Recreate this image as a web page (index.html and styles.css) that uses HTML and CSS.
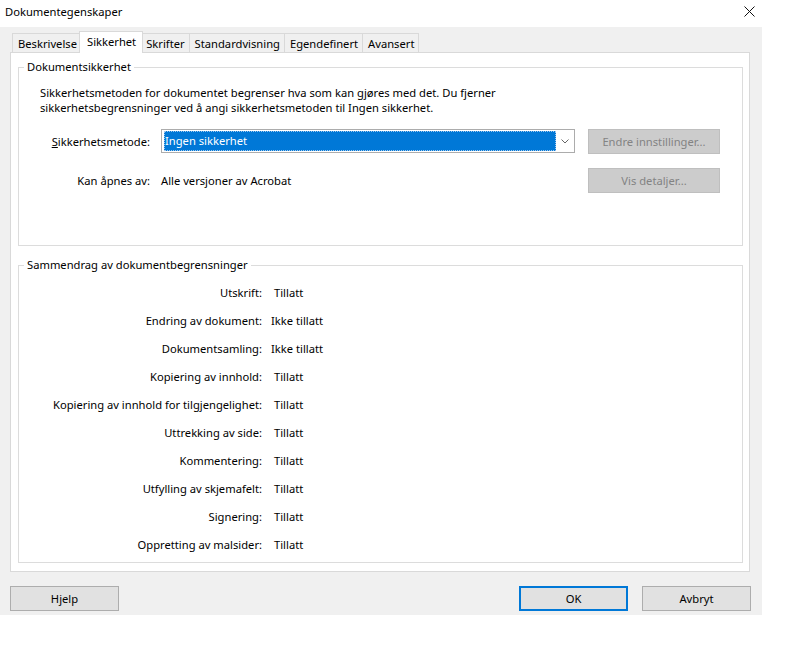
FILE: index.html
```html
<!DOCTYPE html>
<html lang="no">
<head>
<meta charset="utf-8">
<title>Dokumentegenskaper</title>
<link rel="stylesheet" href="styles.css">
</head>
<body>
<div class="titlebar">
  <span class="title">Dokumentegenskaper</span>
  <svg class="close" width="11" height="11" viewBox="0 0 11 11"><path d="M0.5 0.5L10.5 10.5M10.5 0.5L0.5 10.5" stroke="#111" stroke-width="1" fill="none"/></svg>
</div>
<div class="dialog">
  <div class="tabs">
    <div class="tab">Beskrivelse</div>
    <div class="tab active">Sikkerhet</div>
    <div class="tab">Skrifter</div>
    <div class="tab">Standardvisning</div>
    <div class="tab">Egendefinert</div>
    <div class="tab">Avansert</div>
  </div>
  <div class="panel">
    <fieldset class="group group-security">
      <legend>Dokumentsikkerhet</legend>
      <p class="intro"><span class="line">Sikkerhetsmetoden for dokumentet begrenser hva som kan gjøres med det. Du fjerner</span><span class="line">sikkerhetsbegrensninger ved å angi sikkerhetsmetoden til Ingen sikkerhet.</span></p>
      <div class="row">
        <span class="lbl"><u>S</u>ikkerhetsmetode:</span>
        <div class="field combo">
          <span class="combo-value">Ingen sikkerhet</span>
          <span class="combo-arrow"><svg width="8" height="5" viewBox="0 0 8 5"><path d="M0.5 0.5L4 4L7.5 0.5" stroke="#666" fill="none"/></svg></span>
        </div>
        <button class="btn side" disabled>Endre innstillinger...</button>
      </div>
      <div class="row">
        <span class="lbl">Kan åpnes av:</span>
        <span class="field">Alle versjoner av Acrobat</span>
        <button class="btn side" disabled>Vis detaljer...</button>
      </div>
    </fieldset>
    <fieldset class="group group-summary">
      <legend>Sammendrag av dokumentbegrensninger</legend>
      <dl class="summary">
        <dt>Utskrift:</dt><dd class="yes">Tillatt</dd>
        <dt>Endring av dokument:</dt><dd>Ikke tillatt</dd>
        <dt>Dokumentsamling:</dt><dd>Ikke tillatt</dd>
        <dt>Kopiering av innhold:</dt><dd class="yes">Tillatt</dd>
        <dt>Kopiering av innhold for tilgjengelighet:</dt><dd class="yes">Tillatt</dd>
        <dt>Uttrekking av side:</dt><dd class="yes">Tillatt</dd>
        <dt>Kommentering:</dt><dd class="yes">Tillatt</dd>
        <dt>Utfylling av skjemafelt:</dt><dd class="yes">Tillatt</dd>
        <dt>Signering:</dt><dd class="yes">Tillatt</dd>
        <dt>Oppretting av malsider:</dt><dd class="yes">Tillatt</dd>
      </dl>
    </fieldset>
  </div>
  <div class="footer">
    <button class="btn">Hjelp</button>
    <button class="btn default">OK</button>
    <button class="btn">Avbryt</button>
  </div>
</div>
</body>
</html>
```
FILE: styles.css
```css
body {
  margin: 0;
  background: #fff;
  font-family: "Noto Sans", "Open Sans", sans-serif;
  font-size: 11.2px;
  color: #000;
}

.titlebar {
  height: 27px;
  box-sizing: border-box;
  display: flex;
  justify-content: space-between;
  align-items: flex-start;
  padding: 3px 45px 0 5px;
}
.title { line-height: 18px; }
.close { margin-top: 3px; }

.dialog {
  width: 762px;
  height: 588px;
  box-sizing: border-box;
  background: #f0f0f0;
  padding: 4px 11px 0 10px;
}

.tabs {
  display: flex;
  align-items: flex-end;
  height: 21px;
  padding-left: 3px;
}
.tab {
  height: 19px;
  box-sizing: border-box;
  border: 1px solid #d9d9d9;
  border-bottom: none;
  margin-left: -1px;
  padding: 0 4px 0 5px;
  line-height: 19px;
  background: #f0f0f0;
  white-space: nowrap;
}
.tab.active {
  height: 22px;
  margin: 0 -2px -1px -3px;
  padding: 0 6px 0 7px;
  line-height: 19px;
  background: #fff;
  position: relative;
  z-index: 1;
}

.panel {
  width: 740px;
  height: 520px;
  box-sizing: border-box;
  border: 1px solid #d9d9d9;
  background: #fff;
  padding: 6px 6px 0 7px;
}

.group {
  margin: 0;
  padding: 0;
  min-width: 0;
  border: 1px solid #dcdcdc;
  box-sizing: border-box;
}
.group legend {
  margin-left: 5px;
  padding: 0 3px;
  line-height: 16px;
}
.group-security { height: 187px; }
.group-summary { height: 306px; margin-top: 11px; }

.intro {
  margin: 10px 0 0 21px;
  line-height: 15px;
}
.intro .line {
  display: block;
  height: 15px;
}

.row {
  display: flex;
  align-items: flex-start;
  margin-top: 14px;
  margin-left: 21px;
}
.lbl {
  width: 110px;
  text-align: right;
  line-height: 25px;
  white-space: nowrap;
}
.field {
  width: 414px;
  margin-left: 11px;
  line-height: 25px;
}

.combo {
  height: 24px;
  box-sizing: border-box;
  border: 1px solid #acacac;
  background: #fff;
  padding: 1px 0 1px 2px;
  display: flex;
  line-height: 20px;
}
.combo-value {
  flex: 1;
  background: #0078d7;
  color: #fff;
  padding-left: 1px;
  outline: 1px dotted #9fc7ee;
  outline-offset: -1px;
}
.combo-arrow {
  width: 18px;
  display: flex;
  align-items: center;
  justify-content: center;
}

.btn {
  font-family: inherit;
  font-size: 11.2px;
  color: #000;
  width: 109px;
  height: 25px;
  box-sizing: border-box;
  background: #e1e1e1;
  border: 1px solid #adadad;
  padding: 0;
  margin: 0;
}
.btn.side {
  width: 132px;
  margin-left: 13px;
}
.btn:disabled {
  background: #cccccc;
  border-color: #bfbfbf;
  color: #838383;
}
.btn.default {
  border: 2px solid #0078d7;
  margin-left: auto;
}

.summary {
  margin: 6px 0 0;
  display: grid;
  grid-template-columns: 243px auto;
  column-gap: 9px;
  grid-auto-rows: 28px;
  line-height: 28px;
}
.summary dt {
  text-align: right;
  white-space: nowrap;
}
.summary dd {
  margin: 0;
}
.summary dd.yes { padding-left: 3px; }

.footer {
  display: flex;
  margin-top: 14px;
}
.footer .btn + .btn + .btn { margin-left: 14px; }
```
